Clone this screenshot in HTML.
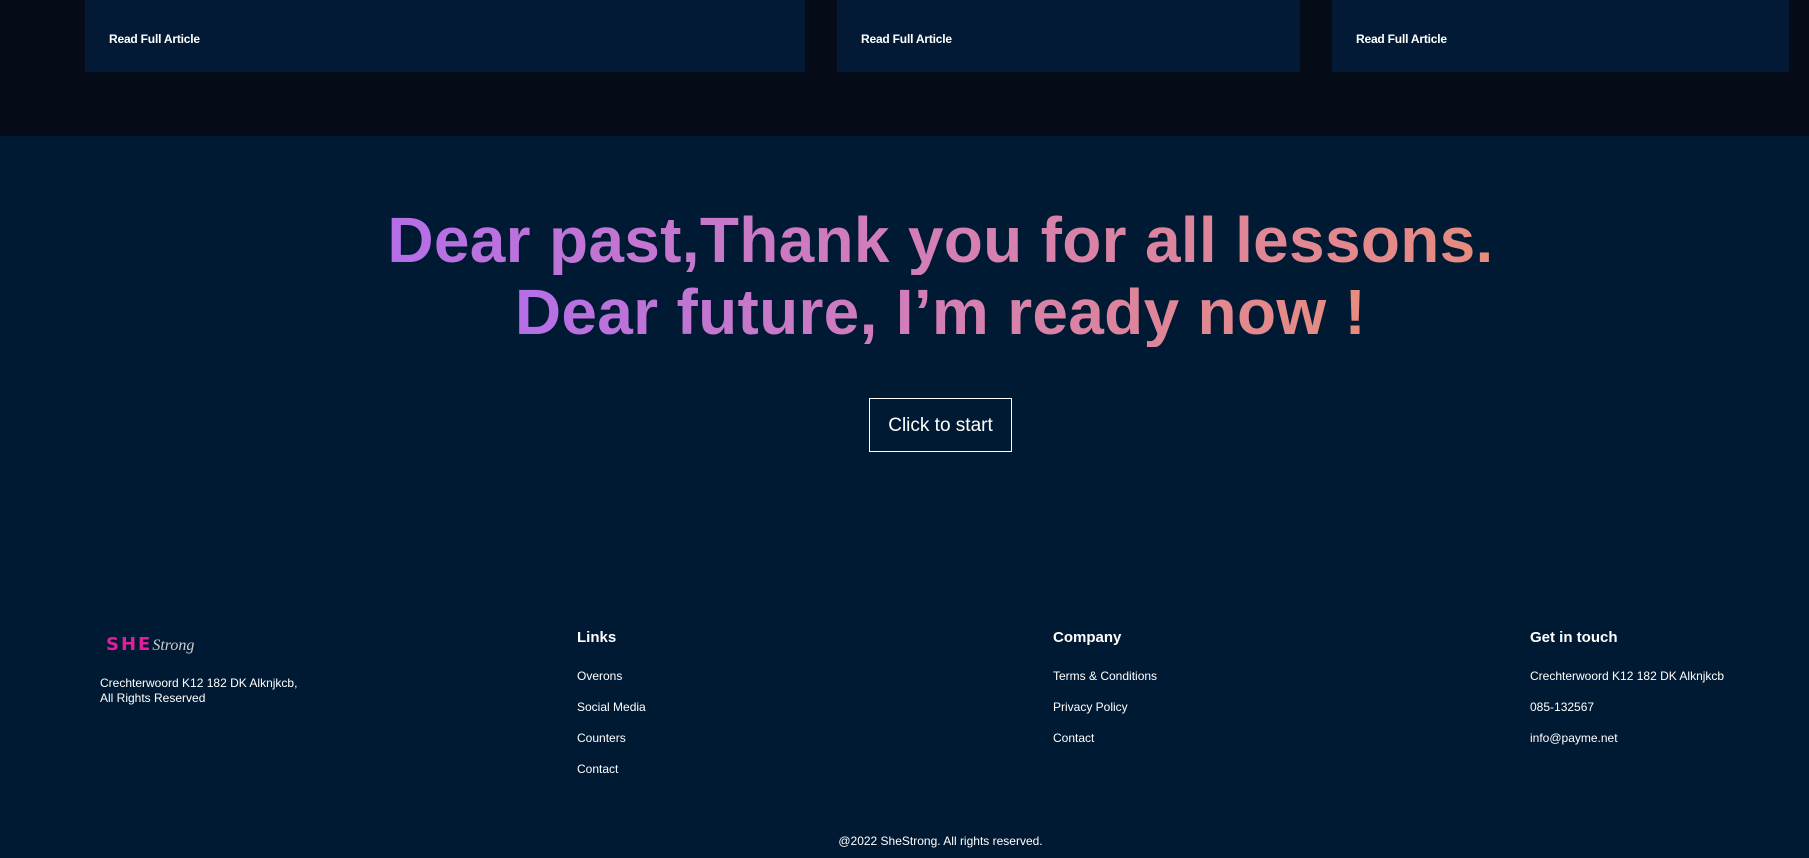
<!DOCTYPE html>
<html><head><meta charset="utf-8"><style>
*{margin:0;padding:0;box-sizing:border-box}
body{width:1809px;height:858px;background:#011a33;font-family:"Liberation Sans",sans-serif;color:#fff;position:relative;overflow:hidden}
.top{position:absolute;left:0;top:0;width:1809px;height:136px;background:#050c18}
.card{position:absolute;top:0;height:72px;background:#021a35}
.card span{position:absolute;left:24px;top:32px;font-size:12px;font-weight:bold;letter-spacing:-0.2px}
.h{position:absolute;left:36px;width:1809px;text-align:center;font-size:64px;font-weight:bold;line-height:70px;letter-spacing:0.3px}
.h span{background:linear-gradient(90deg,#b46ee8,#d47fb4 50%,#e88c7e);-webkit-background-clip:text;background-clip:text;color:transparent;display:inline-block;padding:0 4px}
.btn{position:absolute;left:869px;top:398px;width:143px;height:54px;border:1px solid #fff;font-size:19px;line-height:54px;text-align:center}
.col{position:absolute;top:628px;font-size:12px}
.col h4{font-size:15px;font-weight:bold;margin-bottom:13px;line-height:20px}
.col p{line-height:31px}
.logo{position:absolute;left:106px;top:634px;font-size:18px;font-weight:900}
.addr{position:absolute;left:100px;top:676px;font-size:12px;line-height:15px}
.copy{position:absolute;left:36px;width:1809px;top:834px;text-align:center;font-size:12px}
</style></head><body>
<div class="top"></div>
<div class="card" style="left:85px;width:720px"><span>Read Full Article</span></div>
<div class="card" style="left:837px;width:463px"><span>Read Full Article</span></div>
<div class="card" style="left:1332px;width:457px"><span>Read Full Article</span></div>
<div class="h" style="top:205px"><span>Dear past,Thank you for all lessons.</span></div>
<div class="h" style="top:277px"><span>Dear future, I’m ready now !</span></div>
<div class="btn">Click to start</div>
<div class="logo"><span style="color:#e0209a;letter-spacing:2px;font-family:'DejaVu Sans',sans-serif">SHE</span><span style="font-family:'Liberation Serif',serif;font-style:italic;font-weight:normal;color:#ccc;font-size:16px">Strong</span></div>
<div class="addr">Crechterwoord K12 182 DK Alknjkcb,<br>All Rights Reserved</div>
<div class="col" style="left:577px"><h4>Links</h4><p>Overons</p><p>Social Media</p><p>Counters</p><p>Contact</p></div>
<div class="col" style="left:1053px"><h4>Company</h4><p>Terms &amp; Conditions</p><p>Privacy Policy</p><p>Contact</p></div>
<div class="col" style="left:1530px"><h4>Get in touch</h4><p>Crechterwoord K12 182 DK Alknjkcb</p><p>085-132567</p><p>info@payme.net</p></div>
<div class="copy">@2022 SheStrong. All rights reserved.</div>
</body></html>
